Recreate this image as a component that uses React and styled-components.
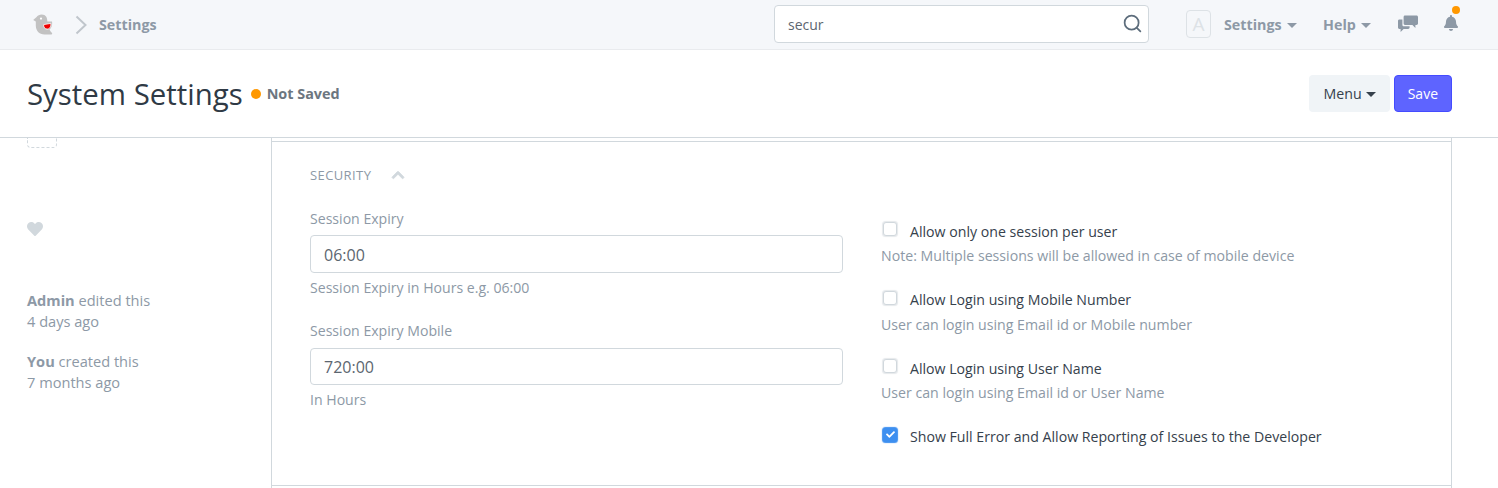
import React from 'react';
import styled, { createGlobalStyle } from 'styled-components';
import { FaBell, FaHeart, FaChevronUp, FaCheck } from 'react-icons/fa';
import { FiSearch } from 'react-icons/fi';

const GlobalStyle = createGlobalStyle`
  html, body {
    margin: 0;
    padding: 0;
    background: #fff;
  }
  body {
    font-family: "Open Sans", "Noto Sans", "Liberation Sans", sans-serif;
    font-size: 14px;
    color: #36414c;
  }
  * {
    box-sizing: border-box;
  }
`;

const BirdLogo = () => (
  <svg width="20" height="21" viewBox="0 0 20 21">
    <path
      d="M3.6 3 C5.4 -0.2 11.6 -0.6 13.4 3 C14.2 4.6 14.2 6 14.4 7.6 L19 7.6 C19.6 11 18.6 14 16.4 15.6 C17 17 17.8 18 19 19 C19.4 19.6 19 20.6 18 20.6 L11.6 20.6 C6 20.6 2.8 16.6 2.8 11.6 L2.8 7.6 L0.2 6 Z"
      fill="#c2c2c2"
    />
    <circle cx="8" cy="4.6" r="1.1" fill="#fff" />
    <path d="M10.6 10.6 L17.8 9.4 C18.2 12.6 16.6 15.2 14 15.1 C11.8 15 10.4 13 10.6 10.6 Z" fill="#ee0000" stroke="#fff" strokeWidth="0.8" />
  </svg>
);

const ChatIcon = () => (
  <svg width="20" height="17" viewBox="0 0 20 17" fill="#8d99a6">
    <path d="M7 0.5 H18.5 C19.3 0.5 20 1.2 20 2 V8.6 C20 9.4 19.3 10 18.5 10 H17.4 V13 L14.4 10 H7 C6.2 10 5.6 9.4 5.6 8.6 V2 C5.6 1.2 6.2 0.5 7 0.5 Z" />
    <path d="M4.4 4.6 V10 C4.4 10.8 5 11.3 5.8 11.3 H11.6 V12.6 C11.6 13.4 11 14 10.2 14 H5.6 L2.6 17 V14 H1.4 C0.6 14 0 13.4 0 12.6 V6 C0 5.2 0.6 4.6 1.4 4.6 Z" />
  </svg>
);

const fields = [
  { label: 'Session Expiry', value: '06:00', help: 'Session Expiry in Hours e.g. 06:00' },
  { label: 'Session Expiry Mobile', value: '720:00', help: 'In Hours' },
];

const checks = [
  { label: 'Allow only one session per user', help: 'Note: Multiple sessions will be allowed in case of mobile device' },
  { label: 'Allow Login using Mobile Number', help: 'User can login using Email id or Mobile number' },
  { label: 'Allow Login using User Name', help: 'User can login using Email id or User Name' },
  { label: 'Show Full Error and Allow Reporting of Issues to the Developer', checked: true },
];

export default function App() {
  return (
    <Page>
      <GlobalStyle />
      <Navbar>
        <Brand>
          <BirdLogo />
        </Brand>
        <Crumb>
          <svg width="14" height="20" viewBox="0 0 14 20" fill="none" stroke="#c0c6cc" strokeWidth="2">
            <path d="M2.5 1.5 L11.5 10 L2.5 18.5" />
          </svg>
          <CrumbText>Settings</CrumbText>
        </Crumb>
        <SearchBox>
          <SearchText>secur</SearchText>
          <FiSearch size={21} color="#5d6d7c" />
        </SearchBox>
        <Avatar>A</Avatar>
        <NavLink $width="99px">Settings<Caret /></NavLink>
        <NavLink $width="75px">Help<Caret /></NavLink>
        <IconSlot $width="45px"><ChatIcon /></IconSlot>
        <BellSlot>
          <FaBell size={16} color="#8d99a6" />
          <Dot />
        </BellSlot>
      </Navbar>

      <PageHead>
        <Title>System Settings</Title>
        <Indicator>Not Saved</Indicator>
        <Actions>
          <MenuButton>Menu<Caret $dark /></MenuButton>
          <SaveButton>Save</SaveButton>
        </Actions>
      </PageHead>

      <Body>
        <Sidebar>
          <ImagePlaceholder />
          <Like><FaHeart size={16} color="#d1d8dd" /></Like>
          <Activity><b>Admin</b> edited this<br />4 days ago</Activity>
          <Activity $gap="19px"><b>You</b> created this<br />7 months ago</Activity>
        </Sidebar>
        <Main>
          <Section>
            <SectionHead>
              SECURITY
              <FaChevronUp size={14} color="#d1d8dd" />
            </SectionHead>
            <Columns>
              <LeftColumn>
                {fields.map((f) => (
                  <Field key={f.label}>
                    <FieldLabel>{f.label}</FieldLabel>
                    <ValueBox>{f.value}</ValueBox>
                    <Help>{f.help}</Help>
                  </Field>
                ))}
              </LeftColumn>
              <RightColumn>
                {checks.map((c) => (
                  <CheckField key={c.label}>
                    <CheckRow>
                      <Box $checked={c.checked}>{c.checked && <FaCheck size={9} color="#fff" />}</Box>
                      {c.label}
                    </CheckRow>
                    {c.help && <CheckHelp>{c.help}</CheckHelp>}
                  </CheckField>
                ))}
              </RightColumn>
            </Columns>
          </Section>
        </Main>
      </Body>
    </Page>
  );
}

const Page = styled.div`
  width: 1498px;
  height: 488px;
  overflow: hidden;
`;

const Navbar = styled.div`
  display: flex;
  align-items: center;
  height: 50px;
  padding-left: 33px;
  background: #f5f7fa;
  border-bottom: 1px solid #e9ebee;
`;

const Brand = styled.div`
  display: flex;
  width: 41px;
`;

const Crumb = styled.div`
  display: flex;
  align-items: center;
  gap: 11px;
`;

const CrumbText = styled.span`
  font-size: 14.3px;
  font-weight: 700;
  color: #8d99a6;
`;

const SearchBox = styled.div`
  display: flex;
  align-items: center;
  justify-content: space-between;
  width: 375px;
  height: 38px;
  margin-top: -2px;
  margin-left: auto;
  margin-right: 37px;
  padding: 0 5px 0 13px;
  background: #fff;
  border: 1px solid #d1d8dd;
  border-radius: 4px;
  font-size: 14px;
  color: #5c6670;
`;

const SearchText = styled.span`
  margin-top: 2px;
`;

const Avatar = styled.div`
  display: flex;
  align-items: center;
  justify-content: center;
  width: 25px;
  height: 28px;
  margin-top: -2px;
  margin-right: 13px;
  border: 1px solid #dde2e6;
  border-radius: 4px;
  font-size: 19px;
  color: #dde2e6;
`;

const NavLink = styled.div`
  display: flex;
  align-items: center;
  gap: 5px;
  width: ${(p) => p.$width};
  font-size: 14.3px;
  font-weight: 700;
  color: #8d99a6;
`;

const Caret = styled.span`
  display: inline-block;
  width: 0;
  height: 0;
  margin-top: 1px;
  border-left: 5px solid transparent;
  border-right: 5px solid transparent;
  border-top: 5px solid ${(p) => (p.$dark ? '#36414c' : '#8d99a6')};
`;

const IconSlot = styled.div`
  display: flex;
  align-items: center;
  width: ${(p) => p.$width};
  margin-top: -3px;
`;

const BellSlot = styled.div`
  position: relative;
  display: flex;
  width: 55px;
  margin-top: -4px;
`;

const Dot = styled.span`
  position: absolute;
  top: -9px;
  left: 9px;
  width: 8px;
  height: 8px;
  border-radius: 50%;
  background: #ff9800;
`;

const PageHead = styled.div`
  display: flex;
  align-items: center;
  height: 88px;
  padding: 0 46px 0 27px;
  background: #fff;
  border-bottom: 1px solid #d1d8dd;
`;

const Title = styled.h1`
  margin: 0 8px 0 0;
  font-size: 29.4px;
  font-weight: 400;
  color: #2f3a45;
`;

const Indicator = styled.div`
  display: flex;
  align-items: center;
  gap: 6px;
  font-size: 14.4px;
  font-weight: 700;
  color: #6c7680;
  &::before {
    content: '';
    width: 10px;
    height: 10px;
    border-radius: 50%;
    background: #ff9800;
  }
`;

const Actions = styled.div`
  display: flex;
  gap: 4px;
  margin-left: auto;
`;

const MenuButton = styled.div`
  display: flex;
  align-items: center;
  gap: 4px;
  height: 37px;
  padding: 0 14px 0 15px;
  background: #f0f4f7;
  border-radius: 4px;
  font-size: 14.2px;
  color: #36414c;
`;

const SaveButton = styled.div`
  display: flex;
  align-items: center;
  height: 37px;
  padding: 0 13px;
  background: #5e64ff;
  border: 1px solid #444bff;
  border-radius: 4px;
  font-size: 14px;
  color: #fff;
`;

const Body = styled.div`
  display: flex;
`;

const Sidebar = styled.div`
  width: 271px;
  padding-left: 27px;
  font-size: 14.6px;
  color: #8d99a6;
`;

const ImagePlaceholder = styled.div`
  width: 30px;
  height: 10px;
  border: 1px dashed #d1d8dd;
  border-top: none;
  border-radius: 0 0 4px 4px;
`;

const Like = styled.div`
  display: flex;
  margin-top: 73px;
`;

const Activity = styled.div`
  margin-top: ${(p) => p.$gap || '53px'};
  line-height: 21px;
  b {
    font-weight: 700;
  }
`;

const Main = styled.div`
  width: 1181px;
  height: 350px;
  padding-top: 3px;
  border-left: 1px solid #d1d8dd;
  border-right: 1px solid #d1d8dd;
`;

const Section = styled.div`
  height: 345px;
  padding: 0 38px 0 38px;
  border-top: 1px solid #d1d8dd;
  border-bottom: 1px solid #d1d8dd;
`;

const SectionHead = styled.div`
  display: flex;
  align-items: center;
  gap: 20px;
  height: 67px;
  padding-bottom: 2px;
  font-size: 13px;
  letter-spacing: 0.4px;
  color: #8d99a6;
  svg {
    stroke: #d1d8dd;
    stroke-width: 30px;
  }
`;

const Columns = styled.div`
  display: flex;
`;

const LeftColumn = styled.div`
  width: 533px;
  margin-right: 38px;
`;

const RightColumn = styled.div`
  flex: 1;
  padding-top: 10px;
`;

const Field = styled.div`
  height: 113px;
`;

const FieldLabel = styled.div`
  height: 26.5px;
  margin-top: -0.5px;
  font-size: 14.1px;
  line-height: 20px;
  color: #8d99a6;
`;

const ValueBox = styled.div`
  display: flex;
  align-items: center;
  height: 37.5px;
  padding: 2px 0 0 13px;
  border: 1px solid #d1d8dd;
  border-radius: 4px;
  font-size: 16px;
  color: #5c6670;
`;

const Help = styled.div`
  margin-top: 5px;
  font-size: 14.1px;
  line-height: 20px;
  color: #8d99a6;
`;

const CheckField = styled.div`
  height: 68.5px;
`;

const CheckRow = styled.div`
  display: flex;
  align-items: center;
  gap: 13px;
  height: 24px;
  padding-left: 2px;
  font-size: 14.15px;
  color: #36414c;
`;

const Box = styled.span`
  display: flex;
  align-items: center;
  justify-content: center;
  width: 14px;
  height: 14px;
  margin-top: -4px;
  background: ${(p) => (p.$checked ? '#3d8ff0' : '#fff')};
  border: 1px solid ${(p) => (p.$checked ? '#3d8ff0' : '#d1d8dd')};
  border-radius: 3px;
  box-shadow: 0 0 1px 0.5px ${(p) => (p.$checked ? '#3d8ff0' : '#e6e9ec')};
`;

const CheckHelp = styled.div`
  margin-top: 3px;
  font-size: 14.15px;
  line-height: 20px;
  color: #8d99a6;
`;
